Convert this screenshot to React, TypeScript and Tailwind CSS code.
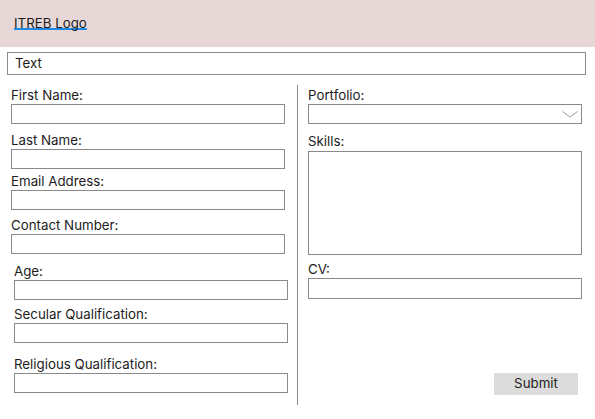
import React from "react";

type Field = { label: string; gap: string; shift?: boolean };

const leftFields: Field[] = [
  { label: "First Name:", gap: "mt-0" },
  { label: "Last Name:", gap: "mt-[6px]" },
  { label: "Email Address:", gap: "mt-[2px]" },
  { label: "Contact Number:", gap: "mt-[5px]" },
  { label: "Age:", gap: "mt-[7px]", shift: true },
  { label: "Secular Qualification:", gap: "mt-[4px]", shift: true },
  { label: "Religious Qualification:", gap: "mt-[11px]", shift: true },
];

function Box({ className = "" }: { className?: string }) {
  return <div className={`w-[274px] h-[20px] border border-[#8a8a8a] bg-white ${className}`} />;
}

function Label({ text }: { text: string }) {
  return <div className="h-[19px] leading-[19px] pt-[1px]">{text}</div>;
}

export default function App() {
  return (
    <div className="w-[595px] h-[419px] bg-white text-[13.3px] text-[#1c1c1c] font-['Inter','Liberation_Sans',sans-serif] overflow-hidden">
      {/* Header */}
      <header className="h-[47px] bg-[#e7d7d7] flex items-center px-[14px]">
        <span className="underline decoration-[#1e88e5] decoration-2 underline-offset-[0px] [text-decoration-skip-ink:none]">
          ITREB Logo
        </span>
      </header>

      {/* Text bar */}
      <div className="mt-[5px] ml-[7px] w-[579px] h-[23px] border border-[#8a8a8a] flex items-center pl-[7px]">
        Text
      </div>

      {/* Form */}
      <div className="mt-[10px] h-[320px] flex">
        <div className="w-[297px] pl-[11px] flex flex-col">
          {leftFields.map((f) => (
            <div key={f.label} className={`${f.gap} ${f.shift ? "ml-[3px]" : ""}`}>
              <Label text={f.label} />
              <Box />
            </div>
          ))}
        </div>

        <div className="w-px bg-[#8a8a8a]" />

        <div className="flex-1 pl-[10px] flex flex-col">
          <div>
            <Label text="Portfolio:" />
            <div className="w-[274px] h-[20px] border border-[#8a8a8a] flex items-center justify-end pr-[3px]">
              <svg width="16" height="7" viewBox="0 0 16 7" fill="none">
                <path d="M0.5 0.5 L8 6 L15.5 0.5" stroke="#9a9a9a" strokeWidth="1" />
              </svg>
            </div>
          </div>
          <div className="mt-[7px]">
            <Label text="Skills:" />
            <div className="mt-[1px] w-[274px] h-[104px] border border-[#8a8a8a]" />
          </div>
          <div className="mt-[4px]">
            <Label text="CV:" />
            <div className="w-[274px] h-[21px] border border-[#8a8a8a]" />
          </div>
          <button className="self-start ml-[186px] mt-[74px] w-[84px] h-[22px] bg-[#dcdcdc] text-[13.3px] leading-none">
            Submit
          </button>
        </div>
      </div>
    </div>
  );
}
